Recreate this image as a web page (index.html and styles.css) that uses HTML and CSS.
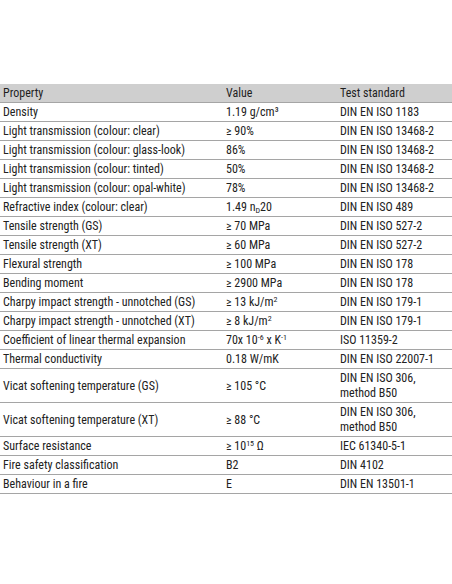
FILE: index.html
```html
<!DOCTYPE html>
<html>
<head>
<meta charset="utf-8">
<link rel="stylesheet" href="styles.css">
</head>
<body>
<div class="page">
<table class="props">
<thead>
<tr><th class="c1">Property</th><th class="c2">Value</th><th class="c3">Test standard</th></tr>
</thead>
<tbody>
<tr><td>Density</td><td>1.19 g/cm³</td><td>DIN EN ISO 1183</td></tr>
<tr><td>Light transmission (colour: clear)</td><td>≥ 90%</td><td>DIN EN ISO 13468-2</td></tr>
<tr><td>Light transmission (colour: glass-look)</td><td>86%</td><td>DIN EN ISO 13468-2</td></tr>
<tr><td>Light transmission (colour: tinted)</td><td>50%</td><td>DIN EN ISO 13468-2</td></tr>
<tr><td>Light transmission (colour: opal-white)</td><td>78%</td><td>DIN EN ISO 13468-2</td></tr>
<tr><td>Refractive index (colour: clear)</td><td>1.49 n<sub>D</sub>20</td><td>DIN EN ISO 489</td></tr>
<tr><td>Tensile strength (GS)</td><td>≥ 70 MPa</td><td>DIN EN ISO 527-2</td></tr>
<tr><td>Tensile strength (XT)</td><td>≥ 60 MPa</td><td>DIN EN ISO 527-2</td></tr>
<tr><td>Flexural strength</td><td>≥ 100 MPa</td><td>DIN EN ISO 178</td></tr>
<tr><td>Bending moment</td><td>≥ 2900 MPa</td><td>DIN EN ISO 178</td></tr>
<tr><td>Charpy impact strength - unnotched (GS)</td><td>≥ 13 kJ/m<sup>2</sup></td><td>DIN EN ISO 179-1</td></tr>
<tr><td>Charpy impact strength - unnotched (XT)</td><td>≥ 8 kJ/m<sup>2</sup></td><td>DIN EN ISO 179-1</td></tr>
<tr><td>Coefficient of linear thermal expansion</td><td>70x 10<sup>-6</sup> x K<sup>-1</sup></td><td>ISO 11359-2</td></tr>
<tr><td>Thermal conductivity</td><td>0.18 W/mK</td><td>DIN EN ISO 22007-1</td></tr>
<tr><td>Vicat softening temperature (GS)</td><td>≥ 105 °C</td><td>DIN EN ISO 306,<br>method B50</td></tr>
<tr><td>Vicat softening temperature (XT)</td><td>≥ 88 °C</td><td>DIN EN ISO 306,<br>method B50</td></tr>
<tr><td>Surface resistance</td><td>≥ 10<sup>15</sup> Ω</td><td>IEC 61340-5-1</td></tr>
<tr><td>Fire safety classification</td><td>B2</td><td>DIN 4102</td></tr>
<tr><td>Behaviour in a fire</td><td>E</td><td>DIN EN 13501-1</td></tr>
</tbody>
</table>
</div>
</body>
</html>
```

FILE: styles.css
```css
html, body {
  margin: 0;
  padding: 0;
  background: #ffffff;
}

.page {
  padding-top: 84px;
}

.props {
  width: 452px;
  border-collapse: collapse;
  font-family: Roboto, "Liberation Sans", sans-serif;
  font-stretch: 75%;
  font-size: 12px;
  color: #222222;
}

.props th,
.props td {
  text-align: left;
  font-weight: normal;
  padding: 2px 4px 1px 3px;
  line-height: 15px;
  vertical-align: middle;
  border-bottom: 1px solid #a5a5a5;
  white-space: nowrap;
}

.props thead th {
  background: #cfcfcf;
  color: #1e1e1e;
}

.props .c1 { width: 216px; }
.props .c2 { width: 107px; }

.props sup,
.props sub {
  font-size: 8px;
  line-height: 0;
}

.props sup { vertical-align: 4px; }
.props sub { vertical-align: -2px; }
```
